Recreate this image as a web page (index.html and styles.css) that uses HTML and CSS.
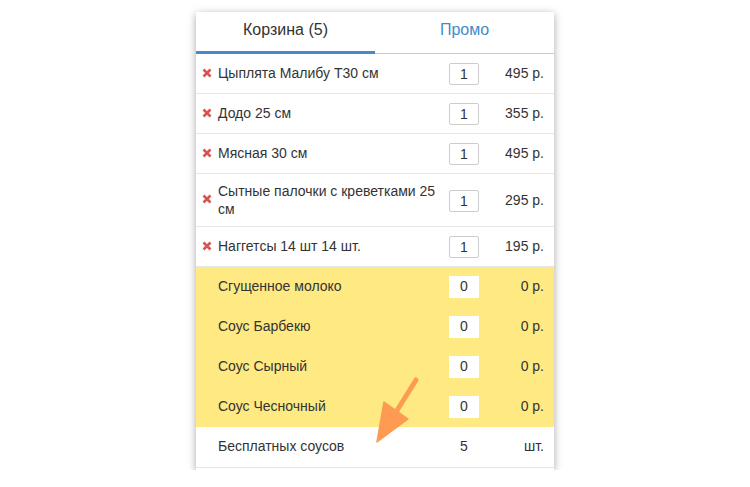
FILE: index.html
```html
<!DOCTYPE html>
<html lang="ru">
<head>
    <meta charset="UTF-8">
    <meta name="viewport" content="width=device-width, initial-scale=1.0">
    <title>Корзина</title>
    <link rel="stylesheet" href="styles.css">
</head>
<body>
    <div class="cart">
        <div class="tabs">
            <div class="tab active">Корзина (5)</div>
            <div class="tab">Промо</div>
        </div>

        <div class="row">
            <span class="remove"><svg viewBox="0 0 10 10"><path d="M1.5 1.5L8.5 8.5M8.5 1.5L1.5 8.5"/></svg></span>
            <span class="name">Цыплята Малибу Т30 см</span>
            <input class="qty" type="text" value="1">
            <span class="price">495 р.</span>
        </div>
        <div class="row">
            <span class="remove"><svg viewBox="0 0 10 10"><path d="M1.5 1.5L8.5 8.5M8.5 1.5L1.5 8.5"/></svg></span>
            <span class="name">Додо 25 см</span>
            <input class="qty" type="text" value="1">
            <span class="price">355 р.</span>
        </div>
        <div class="row">
            <span class="remove"><svg viewBox="0 0 10 10"><path d="M1.5 1.5L8.5 8.5M8.5 1.5L1.5 8.5"/></svg></span>
            <span class="name">Мясная 30 см</span>
            <input class="qty" type="text" value="1">
            <span class="price">495 р.</span>
        </div>
        <div class="row">
            <span class="remove"><svg viewBox="0 0 10 10"><path d="M1.5 1.5L8.5 8.5M8.5 1.5L1.5 8.5"/></svg></span>
            <span class="name">Сытные палочки с креветками 25 см</span>
            <input class="qty" type="text" value="1">
            <span class="price">295 р.</span>
        </div>
        <div class="row">
            <span class="remove"><svg viewBox="0 0 10 10"><path d="M1.5 1.5L8.5 8.5M8.5 1.5L1.5 8.5"/></svg></span>
            <span class="name">Наггетсы 14 шт 14 шт.</span>
            <input class="qty" type="text" value="1">
            <span class="price">195 р.</span>
        </div>

        <div class="row sauce">
            <span class="remove"></span>
            <span class="name">Сгущенное молоко</span>
            <input class="qty" type="text" value="0">
            <span class="price">0 р.</span>
        </div>
        <div class="row sauce">
            <span class="remove"></span>
            <span class="name">Соус Барбекю</span>
            <input class="qty" type="text" value="0">
            <span class="price">0 р.</span>
        </div>
        <div class="row sauce">
            <span class="remove"></span>
            <span class="name">Соус Сырный</span>
            <input class="qty" type="text" value="0">
            <span class="price">0 р.</span>
        </div>
        <div class="row sauce">
            <span class="remove"></span>
            <span class="name">Соус Чесночный</span>
            <input class="qty" type="text" value="0">
            <span class="price">0 р.</span>
        </div>

        <div class="row total">
            <span class="remove"></span>
            <span class="name">Бесплатных соусов</span>
            <span class="count">5</span>
            <span class="price">шт.</span>
        </div>
    </div>

    <!-- annotation arrow -->
    <svg class="arrow" viewBox="0 0 50 75" width="50" height="75">
        <line x1="46" y1="8" x2="26" y2="40" stroke="#ff9a52" stroke-width="5" stroke-linecap="round"/>
        <polygon points="7,70 14,30 38,47" fill="#ff9a52" stroke="#ff9a52" stroke-width="1.5" stroke-linejoin="round"/>
    </svg>
</body>
</html>
```

FILE: styles.css
```css
* {
    margin: 0;
    padding: 0;
    box-sizing: border-box;
}

body {
    position: relative;
    font-family: "Liberation Sans", Arial, sans-serif;
    font-size: 14px;
    color: #333;
    background: #fff;
}

.cart {
    width: 358px;
    margin: 12px auto 0;
    background: #fff;
    box-shadow: 0 2px 8px rgba(0, 0, 0, 0.35);
    padding-bottom: 2px;
}

.tabs {
    display: flex;
    border-bottom: 1px solid #ccc;
}

.tab {
    flex: 1;
    height: 42px;
    padding-top: 9px;
    text-align: center;
    font-size: 16px;
    color: #428bca;
    margin-bottom: -1px;
}

.tab.active {
    color: #333;
    border-bottom: 3px solid #4a88c6;
}

.row {
    display: flex;
    align-items: center;
    padding: 9px 10px 8px 6px;
    border-bottom: 1px solid #e6e6e6;
    line-height: 17.5px;
}

.remove {
    width: 16px;
    flex-shrink: 0;
    display: flex;
    margin-top: -3px;
}

.remove svg {
    width: 10px;
    height: 10px;
    stroke: #d9534f;
    stroke-width: 2.6;
}

.name {
    flex: 1;
    padding-right: 10px;
}

.qty {
    width: 30px;
    height: 22px;
    border: 1px solid #ccc;
    border-radius: 2px;
    text-align: center;
    font-family: inherit;
    font-size: 14px;
    color: #333;
    background: #fff;
}

.price {
    width: 65px;
    text-align: right;
}

.sauce {
    background: #fee983;
    border-bottom-color: #fee983;
}

.sauce .qty {
    border-color: #fff;
    border-radius: 0;
    padding-bottom: 3px;
}

.total {
    padding-top: 11px;
    padding-bottom: 11px;
}

.count {
    width: 30px;
    text-align: center;
}

.arrow {
    position: absolute;
    left: 370px;
    top: 372px;
}
```
